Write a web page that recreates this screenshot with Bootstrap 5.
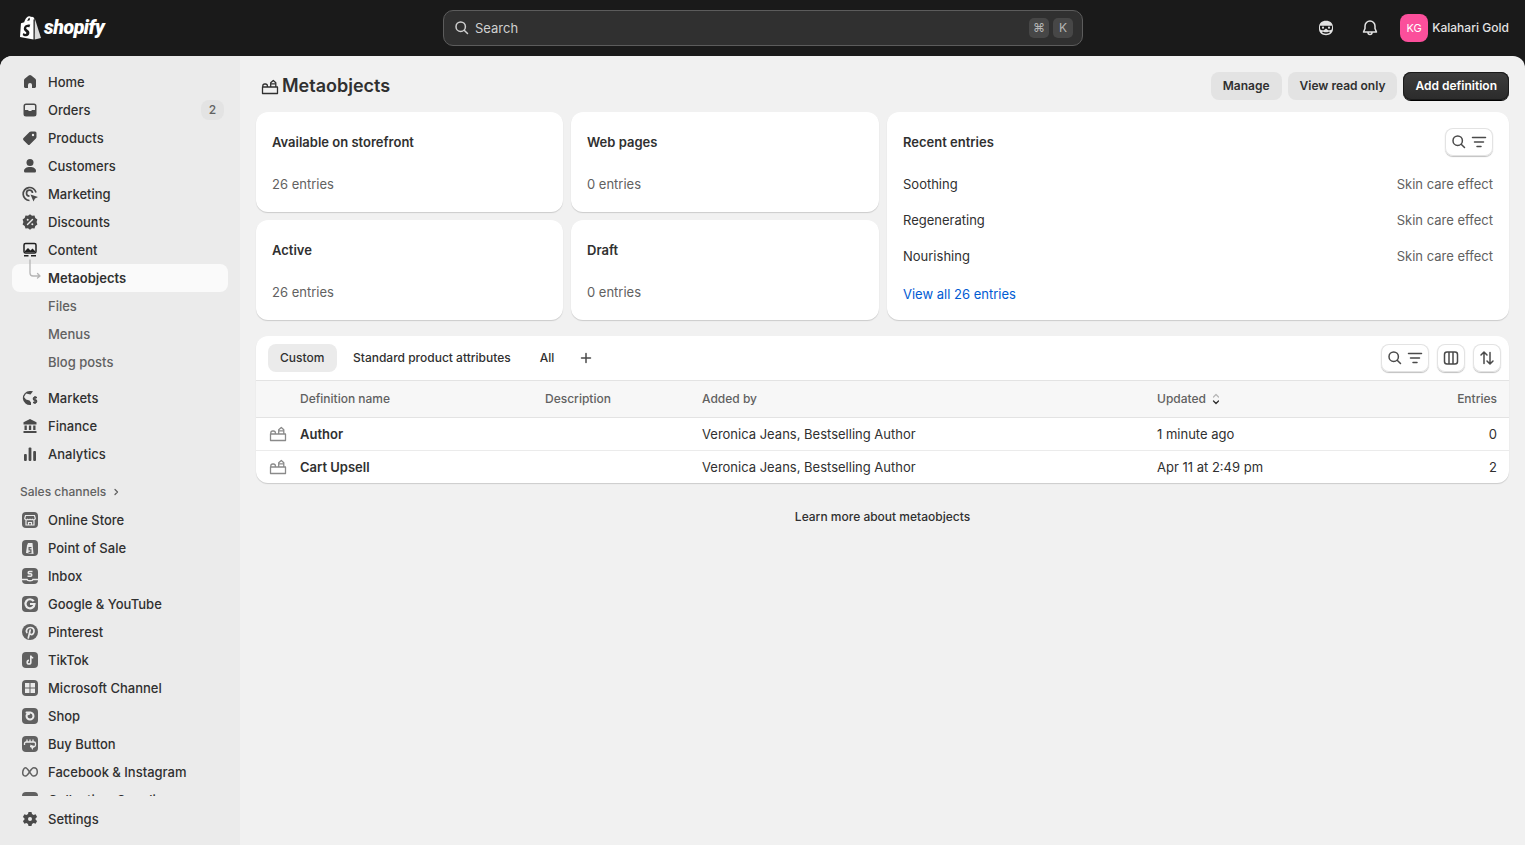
<!DOCTYPE html>
<html lang="en">
<head>
  <meta charset="UTF-8">
  <meta name="viewport" content="width=device-width, initial-scale=1.0">
  <title>Metaobjects</title>
  <link href="https://cdn.jsdelivr.net/npm/bootstrap@5.3.0/dist/css/bootstrap.min.css" rel="stylesheet">
  <style>
    html, body { height: 100%; }
    body {
      font-family: Inter, "Liberation Sans", sans-serif;
      font-size: 13px;
      line-height: 20px;
      color: #303030;
      background: #1a1a1a;
      overflow: hidden;
    }
    svg { display: block; flex: none; }

    /* top bar */
    .topbar { height: 56px; background: #1a1a1a; color: #e3e3e3; padding: 0 16px 0 20px; }
    .logo-slot { width: 423px; }
    .logo-word {
      font-family: Roboto, "Liberation Sans", sans-serif;
      font-style: italic; font-weight: 900; font-size: 19.5px; letter-spacing: -.45px;
      color: #fff; margin-left: 3px; line-height: 24px;
    }
    .searchbox {
      width: 640px; height: 36px; background: #303030; border: 1px solid #5c5c5c;
      border-radius: 10px; padding: 0 9px 0 8px; font-size: 13px; color: #cfcfcf; gap: 3px;
    }
    .keycap {
      width: 20px; height: 20px; border-radius: 5px; background: #474747; color: #b5b5b5;
      font-size: 12px; line-height: 20px; text-align: center;
    }
    .keycap + .keycap { margin-left: 1px; }
    .top-actions { margin-left: auto; }
    .top-icon { width: 20px; margin-right: 24px; }
    .top-icon + .top-icon { margin-right: 20px; }
    .avatar {
      width: 28px; height: 28px; background: #fb4f9b; color: #fff; border-radius: 8px;
      font-size: 11px; line-height: 28px; text-align: center; margin-right: 4px;
    }
    .shop-name { font-size: 12px; font-weight: 500; color: #e3e3e3; letter-spacing: .02px; }

    /* frame */
    .frame { height: calc(100% - 56px); border-radius: 12px 12px 0 0; overflow: hidden; background: #f1f1f1; }
    .sidebar { width: 240px; background: #ebebeb; }
    .side-scroll { height: 740px; padding: 12px 12px 0; overflow: hidden; }
    .side-foot { padding: 9px 12px 0; }
    .side-item {
      position: relative; height: 28px; border-radius: 8px; padding: 0 8px;
      font-weight: 500; color: #303030; gap: 8px;
    }
    .side-item svg { color: #4a4a4a; }
    .side-item svg.tile-icon { color: #616161; }
    .side-item.sub { padding-left: 36px; color: #616161; }
    .side-item.current { background: #fafafa; color: #303030; font-weight: 600; }
    .side-gap { height: 8px; }
    .count-pill {
      margin-left: auto; margin-right: -4px; width: 23px; height: 20px; border-radius: 8px; background: #e3e3e3;
      color: #616161; font-size: 12px; text-align: center;
    }
    .side-item svg.branch { position: absolute; left: 16px; top: -5px; color: #b5b5b5; }
    .side-head { height: 22px; margin-top: 13px; margin-bottom: 3px; padding-left: 8px; color: #616161; font-size: 12px; font-weight: 500; gap: 4px; }

    /* main */
    .main-pane { padding: 16px 16px 0; min-width: 0; }
    .title-row { height: 28px; margin-bottom: 12px; }
    .page-title { font-size: 18px; line-height: 28px; font-weight: 600; color: #303030; margin: 0 0 0 2px; }
    .title-icon { margin-left: 4px; margin-top: 2px; color: #303030; }
    .btn-soft, .btn-ink {
      height: 28px; padding: 0 12px; border: 0; border-radius: 8px; font-size: 12px; font-weight: 600; line-height: 28px;
    }
    .btn-soft { background: #e3e3e3; color: #303030; }
    .btn-ink {
      background: linear-gradient(#3d3d3d, #2b2b2b); color: #fff;
      box-shadow: 0 0 0 1px #1a1a1a inset, 0 1px 0 #000;
    }
    .sheet { background: #fff; border-radius: 12px; box-shadow: 0 1px 1px rgba(0,0,0,.16); }
    .stats-grid { display: grid; grid-template-columns: 307px 308px 1fr; grid-template-rows: 100px 100px; gap: 8px; margin-bottom: 16px; }
    .stat-box { padding: 20px 16px; }
    .stat-label { font-weight: 600; height: 20px; }
    .stat-value { color: #616161; margin-top: 22px; }
    .recent-box { grid-column: 3; grid-row: 1 / span 2; padding: 17px 16px 0 16px; }
    .recent-row { height: 36px; color: #303030; }
    .recent-kind { color: #616161; }
    .recent-link { color: #005bd3; text-decoration: none; font-weight: 400; margin-top: 10px; display: block; }
    .icon-btn {
      height: 28px; padding: 0 4px; background: #fff; border: 0; border-radius: 8px;
      box-shadow: 0 0 0 1px #e3e3e3 inset, 0 1px 1px rgba(0,0,0,.25);
      color: #4a4a4a;
    }
    .table-sheet { overflow: hidden; }
    .tabs-row { height: 44px; padding: 0 8px 0 12px; border-bottom: 1px solid #e3e3e3; box-sizing: content-box; }
    .view-tab { height: 28px; line-height: 28px; padding: 0 12px; border-radius: 8px; font-size: 12px; font-weight: 500; color: #303030; margin-right: 4px; }
    .view-tab.on { background: #ebebeb; min-width: 69px; }
    .view-tab.last { margin-right: 10px; margin-left: 1px; }
    .def-table { width: 100%; table-layout: fixed; margin: 0; font-size: 13px; }
    .def-table th, .def-table td { padding: 0 12px; border: 0; vertical-align: middle; }
    .def-table th { height: 36px; background: #f7f7f7; color: #616161; font-weight: 500; font-size: 12px; border-bottom: 1px solid #e3e3e3; }
    .def-table td { height: 33px; border-bottom: 1px solid #ebebeb; color: #303030; }
    .def-table tr:last-child td { border-bottom: 0; }
    .def-table td:first-child, .def-table th:first-child { padding: 0 0 0 12px; }
    .row-icon { color: #8a8a8a; }
    .def-name { font-weight: 600; }
    .learn-more { margin-top: 24px; text-align: center; font-size: 12px; font-weight: 500; color: #303030; }
  </style>
</head>
<body>
  <svg width="0" height="0" class="position-absolute">
    <symbol id="i-meta" viewBox="0 0 20 20"><path fill="none" stroke="currentColor" stroke-width="1.300" stroke-linejoin="round" d="M2.500 16.500h15v-6.500h-15zM2.800 10V9a2 2 0 0 1 2-2h.6a2 2 0 0 1 2 2v1M10.700 10V5.800L13.300 3.500l2.500 2.300V10M10.700 6.800h5"/></symbol>
    <symbol id="i-search" viewBox="0 0 20 20"><circle cx="8.700" cy="8.700" r="4.700" fill="none" stroke="currentColor" stroke-width="1.500"/><path stroke="currentColor" stroke-width="1.500" stroke-linecap="round" d="M12.200 12.200 15.500 15.500"/></symbol>
    <symbol id="i-filter" viewBox="0 0 20 20"><path stroke="currentColor" stroke-width="1.500" stroke-linecap="round" d="M3.500 5.500h13M5.500 10h9M8 14.500h4"/></symbol>
    <symbol id="tile" viewBox="0 0 20 20"><rect x="2" y="2" width="16" height="16" rx="4" fill="currentColor"/></symbol>
  </svg>

  <header class="topbar d-flex align-items-center">
    <div class="logo-slot d-flex align-items-center">
      <svg width="21" height="25" viewBox="0 0 21 25"><path fill="#fff" d="M14.500 3.200C14 1.500 13 .8 12 .8c-.3 0-.5.100-.8.300C10.600.4 9.800.100 9 .3 6.500.8 4.800 4 4.300 6.300L1.800 7.100C1 7.300 1 7.400.9 8.100L0 21l13.500 2.600V3.500l1-.300zM9.800 4.300 7.300 5c.5-1.800 1.400-2.900 2.300-3.200.2.600.2 1.500.2 2.500z"/><path fill="#d9d9d9" d="M14.800 3.500 21 23l-6.300 1.500z" transform="translate(0 -1)"/><path fill="#1a1a1a" d="M10 9.200 9.300 11.500s-.8-.4-1.700-.4c-1.400 0-1.400.9-1.400 1.100 0 1.200 3.200 1.700 3.200 4.500 0 2.200-1.400 3.600-3.300 3.600-2.200 0-3.400-1.400-3.400-1.400l.6-1.900s1.200 1 2.200 1c.6 0 .9-.5.900-.9 0-1.600-2.600-1.700-2.600-4.300 0-2.200 1.600-4.400 4.800-4.400 1.200 0 1.800.4 1.800.4z"/></svg>
      <span class="logo-word">shopify</span>
    </div>
    <div class="searchbox d-flex align-items-center">
      <svg width="20" height="20"><use href="#i-search"/></svg>
      <span class="flex-grow-1">Search</span>
      <span class="keycap">⌘</span><span class="keycap">K</span>
    </div>
    <div class="top-actions d-flex align-items-center">
      <svg class="top-icon" width="20" height="20" viewBox="0 0 20 20"><path fill="#e3e3e3" d="M10 2.800c4.300 0 7 2.300 7 6.700v1.500c0 3.700-3 6.200-7 6.200s-7-2.500-7-6.200V9.500c0-4.400 2.700-6.700 7-6.700z"/><path fill="#1a1a1a" d="M4 7.700h12v2.500a2 2 0 0 1-2 2h-1.800L10 10.500l-2.200 1.700H6a2 2 0 0 1-2-2z"/><circle cx="7" cy="9.700" r="1.100" fill="#e3e3e3"/><circle cx="13" cy="9.700" r="1.100" fill="#e3e3e3"/><path fill="none" stroke="#1a1a1a" stroke-width="1.400" stroke-linecap="round" d="M7 14.300c1.800.8 4.200.8 6 0"/></svg>
      <svg class="top-icon" width="20" height="20" viewBox="0 0 20 20"><path fill="none" stroke="#e3e3e3" stroke-width="1.500" stroke-linejoin="round" d="M10 3a5 5 0 0 0-5 5v2.500L3.500 14h13L15 10.500V8a5 5 0 0 0-5-5zM8 14.500a2 2 0 0 0 4 0"/></svg>
      <div class="avatar">KG</div>
      <span class="shop-name">Kalahari Gold</span>
    </div>
  </header>

  <div class="frame d-flex">
    <aside class="sidebar flex-shrink-0">
      <div class="side-scroll">
        <div class="side-item d-flex align-items-center"><svg width="20" height="20" viewBox="0 0 20 20"><path fill="currentColor" d="M8.700 3.500a2 2 0 0 1 2.600 0l4 3.300c.5.400.7 1 .7 1.600v6.100c0 .8-.7 1.500-1.500 1.500H12v-3a2 2 0 0 0-4 0v3H5.500c-.8 0-1.500-.7-1.500-1.500V8.400c0-.6.200-1.200.7-1.600z"/></svg>Home</div>
        <div class="side-item d-flex align-items-center"><svg width="20" height="20" viewBox="0 0 20 20"><path fill="currentColor" d="M6 3.500h8A2.500 2.500 0 0 1 16.500 6v8a2.500 2.500 0 0 1-2.500 2.500H6A2.500 2.500 0 0 1 3.500 14V6A2.500 2.500 0 0 1 6 3.500zM5 10h2.500c.8 0 1 .5 1.300 1h2.400c.3-.5.500-1 1.300-1H15V6a1 1 0 0 0-1-1H6a1 1 0 0 0-1 1z"/></svg>Orders<span class="count-pill">2</span></div>
        <div class="side-item d-flex align-items-center"><svg width="20" height="20" viewBox="0 0 20 20"><path fill="currentColor" d="M11 3.500h4A1.500 1.500 0 0 1 16.500 5v4c0 .6-.2 1.100-.6 1.500l-6 6a1.500 1.500 0 0 1-2.100 0l-4.300-4.300a1.500 1.500 0 0 1 0-2.100l6-6c.4-.4.900-.6 1.500-.6z"/><circle cx="13" cy="7" r="1.200" fill="#ebebeb"/></svg>Products</div>
        <div class="side-item d-flex align-items-center"><svg width="20" height="20" viewBox="0 0 20 20"><circle cx="10" cy="6.500" r="3.500" fill="currentColor"/><path fill="currentColor" d="M4 15c0-2.500 2.500-4 6-4s6 1.500 6 4c0 1-.7 1.500-1.500 1.500h-9C4.700 16.500 4 16 4 15z"/></svg>Customers</div>
        <div class="side-item d-flex align-items-center"><svg width="20" height="20" viewBox="0 0 20 20"><path fill="none" stroke="currentColor" stroke-width="1.700" d="M16 8.500a6.500 6.500 0 1 0-6.500 8M12.500 9a3 3 0 1 0-3 3.200"/><path fill="currentColor" d="M10.500 10.500 18 13l-3 1.500-1.500 3z"/></svg>Marketing</div>
        <div class="side-item d-flex align-items-center"><svg width="20" height="20" viewBox="0 0 20 20"><path fill="currentColor" d="M10 2.300l2 1.500 2.500-.2.800 2.400 2.100 1.400-.8 2.600.8 2.600-2.100 1.400-.8 2.400-2.500-.2-2 1.500-2-1.500-2.500.2-.8-2.400-2.100-1.400.8-2.600-.8-2.600 2.100-1.400.8-2.400 2.500.2z"/><path stroke="#ebebeb" stroke-width="1.400" stroke-linecap="round" d="M12.500 7.500l-5 5"/><circle cx="7.700" cy="7.800" r="1" fill="#ebebeb"/><circle cx="12.300" cy="12.200" r="1" fill="#ebebeb"/></svg>Discounts</div>
        <div class="side-item d-flex align-items-center"><svg width="20" height="20" viewBox="0 0 20 20"><rect x="4" y="3.500" width="12" height="9.500" rx="1.500" fill="none" stroke="#1f1f1f" stroke-width="1.500"/><path fill="#1f1f1f" d="M5 11l3-3 2.500 2.500L12.500 8.500 15 11v1H5z"/><path stroke="#1f1f1f" stroke-width="1.500" d="M4 15.700h4.500M11 15.700h5"/></svg>Content</div>
        <div class="side-item current d-flex align-items-center sub">
          <svg class="branch" width="20" height="22" viewBox="0 0 20 22"><path fill="none" stroke="currentColor" stroke-width="1.300" stroke-linecap="round" stroke-linejoin="round" d="M2 1v13a3 3 0 0 0 3 3h7M9.500 14.500 12 17l-2.500 2"/></svg>
          Metaobjects
        </div>
        <div class="side-item sub d-flex align-items-center">Files</div>
        <div class="side-item sub d-flex align-items-center">Menus</div>
        <div class="side-item sub d-flex align-items-center">Blog posts</div>
        <div class="side-gap"></div>
        <div class="side-item d-flex align-items-center"><svg width="20" height="20" viewBox="0 0 20 20"><path fill="currentColor" d="M10 3a7 7 0 1 0 1 13.900v-2.400l-1.500-2-3.500-1-2-2.500 2-3.500 4.500 1 2.500-3.200A7 7 0 0 0 10 3z"/><path fill="none" stroke="currentColor" stroke-width="1.400" d="M17 9.500h-2.500c-1.500 0-1.500 2.500 0 2.500h1c1.500 0 1.500 2.500 0 2.500H13M15 8v8"/></svg>Markets</div>
        <div class="side-item d-flex align-items-center"><svg width="20" height="20" viewBox="0 0 20 20"><path fill="currentColor" d="M10 3 16.500 6.300V8.500h-13V6.300zM4.500 9.500h2.300v4.500H4.500zM8.900 9.500h2.300v4.500H8.900zM13.200 9.500h2.300v4.500h-2.300zM3.500 15h13v2h-13z"/></svg>Finance</div>
        <div class="side-item d-flex align-items-center"><svg width="20" height="20" viewBox="0 0 20 20"><rect x="4" y="10" width="2.800" height="7" rx="1" fill="currentColor"/><rect x="8.600" y="3.500" width="2.800" height="13.500" rx="1" fill="currentColor"/><rect x="13.200" y="7" width="2.800" height="10" rx="1" fill="currentColor"/></svg>Analytics</div>
        <div class="side-head d-flex align-items-center">Sales channels <svg width="12" height="12" viewBox="0 0 12 12"><path fill="none" stroke="currentColor" stroke-width="1.300" stroke-linecap="round" stroke-linejoin="round" d="M5 3.500 7.500 6 5 8.500"/></svg></div>
        <div class="side-item d-flex align-items-center"><svg class="tile-icon" width="20" height="20" viewBox="0 0 20 20"><use href="#tile"/><path fill="none" stroke="#ebebeb" stroke-width="1.200" d="M5.500 5.500h9l.8 3a1.700 1.700 0 0 1-2.900.8 2 2 0 0 1-2.400 0 2 2 0 0 1-2.400 0 1.700 1.700 0 0 1-2.900-.8zM6 10v5h8v-5M8.500 15v-2.500h3V15"/></svg>Online Store</div>
        <div class="side-item d-flex align-items-center"><svg class="tile-icon" width="20" height="20" viewBox="0 0 20 20"><use href="#tile"/><path fill="#ebebeb" d="M7 7.500 8 5h4.500l1 11-7.500-1z"/><path fill="#616161" d="M8.500 9h3v1.200H9.700v1h1.800V15h-3v-1.200h1.800v-1.200H8.500z"/></svg>Point of Sale</div>
        <div class="side-item d-flex align-items-center"><svg class="tile-icon" width="20" height="20" viewBox="0 0 20 20"><use href="#tile"/><path fill="none" stroke="#ebebeb" stroke-width="1.600" d="M12.500 5.500H9.300c-1.400 0-1.400 2.300 0 2.300h1.400c1.400 0 1.400 2.400 0 2.400H7.500"/><path stroke="#ebebeb" stroke-width="1.600" d="M2 13.500h5c.5 1.500 5.500 1.500 6 0h5"/></svg>Inbox</div>
        <div class="side-item d-flex align-items-center"><svg class="tile-icon" width="20" height="20" viewBox="0 0 20 20"><use href="#tile"/><path fill="none" stroke="#ebebeb" stroke-width="2.200" d="M13.700 7.200A4.500 4.500 0 1 0 14.500 10H10"/></svg>Google &amp; YouTube</div>
        <div class="side-item d-flex align-items-center"><svg class="tile-icon" width="20" height="20" viewBox="0 0 20 20"><circle cx="10" cy="10" r="8" fill="currentColor"/><path fill="none" stroke="#ebebeb" stroke-width="1.700" stroke-linecap="round" d="M6.800 10.500C5.700 8 7.500 5.500 10.300 5.500c2.500 0 4 1.700 3.700 4-.2 2-1.500 3.300-3 3-.8-.1-1.300-.7-1.300-1.300M10.200 8 8.300 16"/></svg>Pinterest</div>
        <div class="side-item d-flex align-items-center"><svg class="tile-icon" width="20" height="20" viewBox="0 0 20 20"><use href="#tile"/><path fill="none" stroke="#ebebeb" stroke-width="1.600" d="M10.800 5.500v6.700a1.800 1.800 0 1 1-1.800-1.800M10.800 5.500c.2 1.400 1 2.200 2.400 2.400"/></svg>TikTok</div>
        <div class="side-item d-flex align-items-center"><svg class="tile-icon" width="20" height="20" viewBox="0 0 20 20"><use href="#tile"/><path fill="#ebebeb" d="M5 5h4.500v4.500H5zM10.500 5H15v4.500h-4.500zM5 10.500h4.500V15H5zM10.500 10.500H15V15h-4.500z"/></svg>Microsoft Channel</div>
        <div class="side-item d-flex align-items-center"><svg class="tile-icon" width="20" height="20" viewBox="0 0 20 20"><use href="#tile"/><path fill="none" stroke="#ebebeb" stroke-width="2" stroke-linecap="round" d="M6.500 6.500h3.800a3.500 3.500 0 1 1-3.800 3.500c0-1.500 1.300-2 2.500-2"/></svg>Shop</div>
        <div class="side-item d-flex align-items-center"><svg class="tile-icon" width="20" height="20" viewBox="0 0 20 20"><use href="#tile"/><path fill="none" stroke="#ebebeb" stroke-width="1.300" d="M7 5.500v2M10 5.500v2M13 5.500v2M4.500 11V9.500c0-1 .7-1.500 1.500-1.500h8c.8 0 1.500.5 1.500 1.500V11c0 1-.7 1.500-1.500 1.500H10"/><path fill="#ebebeb" d="M10 10.500l5.500 2.200-2.200 1-1 2.200z"/></svg>Buy Button</div>
        <div class="side-item d-flex align-items-center"><svg class="tile-icon" width="20" height="20" viewBox="0 0 20 20"><path fill="none" stroke="currentColor" stroke-width="1.500" stroke-linejoin="round" d="M5.500 5.800c2.500 0 5.500 8 7.800 8.200 2.400.2 4-1.500 4-4 0-2.400-1.500-4.200-3.500-4.200-3.400 0-5 8.200-8.300 8.200C3.800 14 2.700 12.800 2.700 11c0-2.500 1.300-5.200 2.800-5.200z"/></svg>Facebook &amp; Instagram</div>
        <div class="side-item d-flex align-items-center"><svg class="tile-icon" width="20" height="20" viewBox="0 0 20 20"><use href="#tile"/></svg>Collective: Supplier</div>
      </div>
      <div class="side-foot">
        <div class="side-item d-flex align-items-center"><svg width="20" height="20" viewBox="0 0 20 20"><path fill="currentColor" fill-rule="evenodd" d="M8.500 3h3l.5 2 1.600.9 2-.6 1.500 2.600-1.500 1.400v1.400l1.500 1.400-1.500 2.600-2-.6-1.600.9-.5 2h-3l-.5-2-1.600-.9-2 .6-1.500-2.600 1.500-1.400V9.300L2.900 7.900l1.500-2.600 2 .6L8 5zM10 8a2 2 0 1 0 0 4 2 2 0 0 0 0-4z"/></svg>Settings</div>
      </div>
    </aside>

    <main class="main-pane flex-grow-1">
      <div class="title-row d-flex align-items-center">
        <svg class="title-icon" width="20" height="20"><use href="#i-meta"/></svg>
        <h1 class="page-title">Metaobjects</h1>
        <div class="ms-auto d-flex align-items-center" style="gap:6px">
          <button class="btn-soft">Manage</button>
          <button class="btn-soft">View read only</button>
          <button class="btn-ink">Add definition</button>
        </div>
      </div>

      <section class="stats-grid">
        <div class="sheet stat-box"><div class="stat-label">Available on storefront</div><div class="stat-value">26 entries</div></div>
        <div class="sheet stat-box"><div class="stat-label">Web pages</div><div class="stat-value">0 entries</div></div>
        <div class="sheet recent-box">
          <div class="d-flex align-items-center justify-content-between" style="height:26px;margin-bottom:11px">
            <span class="stat-label">Recent entries</span>
            <button class="icon-btn d-flex align-items-center"><svg width="20" height="20"><use href="#i-search"/></svg><svg width="20" height="20"><use href="#i-filter"/></svg></button>
          </div>
          <div class="recent-row d-flex align-items-center justify-content-between"><span>Soothing</span><span class="recent-kind">Skin care effect</span></div>
          <div class="recent-row d-flex align-items-center justify-content-between"><span>Regenerating</span><span class="recent-kind">Skin care effect</span></div>
          <div class="recent-row d-flex align-items-center justify-content-between"><span>Nourishing</span><span class="recent-kind">Skin care effect</span></div>
          <a class="recent-link" href="#">View all 26 entries</a>
        </div>
        <div class="sheet stat-box"><div class="stat-label">Active</div><div class="stat-value">26 entries</div></div>
        <div class="sheet stat-box"><div class="stat-label">Draft</div><div class="stat-value">0 entries</div></div>
      </section>

      <section class="sheet table-sheet">
        <div class="tabs-row d-flex align-items-center">
          <div class="view-tab on">Custom</div>
          <div class="view-tab">Standard product attributes</div>
          <div class="view-tab last">All</div>
          <svg width="20" height="20" viewBox="0 0 20 20"><path stroke="#4a4a4a" stroke-width="1.500" stroke-linecap="round" d="M10 5.500v9M5.500 10h9"/></svg>
          <div class="ms-auto d-flex gap-2">
            <button class="icon-btn d-flex align-items-center"><svg width="20" height="20"><use href="#i-search"/></svg><svg width="20" height="20"><use href="#i-filter"/></svg></button>
            <button class="icon-btn d-flex align-items-center"><svg width="20" height="20" viewBox="0 0 20 20"><path fill="none" stroke="currentColor" stroke-width="1.500" d="M6 4h8a2.500 2.500 0 0 1 2.500 2.500v7A2.500 2.500 0 0 1 14 16H6a2.500 2.500 0 0 1-2.500-2.500v-7A2.500 2.500 0 0 1 6 4zM8 4v12M12 4v12"/></svg></button>
            <button class="icon-btn d-flex align-items-center"><svg width="20" height="20" viewBox="0 0 20 20"><path fill="none" stroke="currentColor" stroke-width="1.500" stroke-linecap="round" stroke-linejoin="round" d="M7 15.500v-11M4 7l3-3 3 3M13 4.500v11M10 13l3 3 3-3"/></svg></button>
          </div>
        </div>
        <table class="table def-table">
          <colgroup><col style="width:32px"><col style="width:245px"><col style="width:157px"><col style="width:455px"><col style="width:180px"><col></colgroup>
          <thead>
            <tr>
              <th></th><th>Definition name</th><th>Description</th><th>Added by</th>
              <th><span class="d-inline-flex align-items-center gap-1">Updated <svg width="12" height="14" viewBox="0 0 12 14"><path fill="none" stroke="#b5b5b5" stroke-width="1.200" stroke-linecap="round" stroke-linejoin="round" d="M3.500 5 6 2.500 8.500 5"/><path fill="none" stroke="#303030" stroke-width="1.300" stroke-linecap="round" stroke-linejoin="round" d="M3.500 9 6 11.500 8.500 9"/></svg></span></th>
              <th class="text-end">Entries</th>
            </tr>
          </thead>
          <tbody>
            <tr><td><svg class="row-icon" width="20" height="20"><use href="#i-meta"/></svg></td><td class="def-name">Author</td><td></td><td>Veronica Jeans, Bestselling Author</td><td>1 minute ago</td><td class="text-end">0</td></tr>
            <tr><td><svg class="row-icon" width="20" height="20"><use href="#i-meta"/></svg></td><td class="def-name">Cart Upsell</td><td></td><td>Veronica Jeans, Bestselling Author</td><td>Apr 11 at 2:49 pm</td><td class="text-end">2</td></tr>
          </tbody>
        </table>
      </section>

      <p class="learn-more">Learn more about metaobjects</p>
    </main>
  </div>
  <script src="https://cdn.jsdelivr.net/npm/bootstrap@5.3.0/dist/js/bootstrap.bundle.min.js"></script>
</body>
</html>
